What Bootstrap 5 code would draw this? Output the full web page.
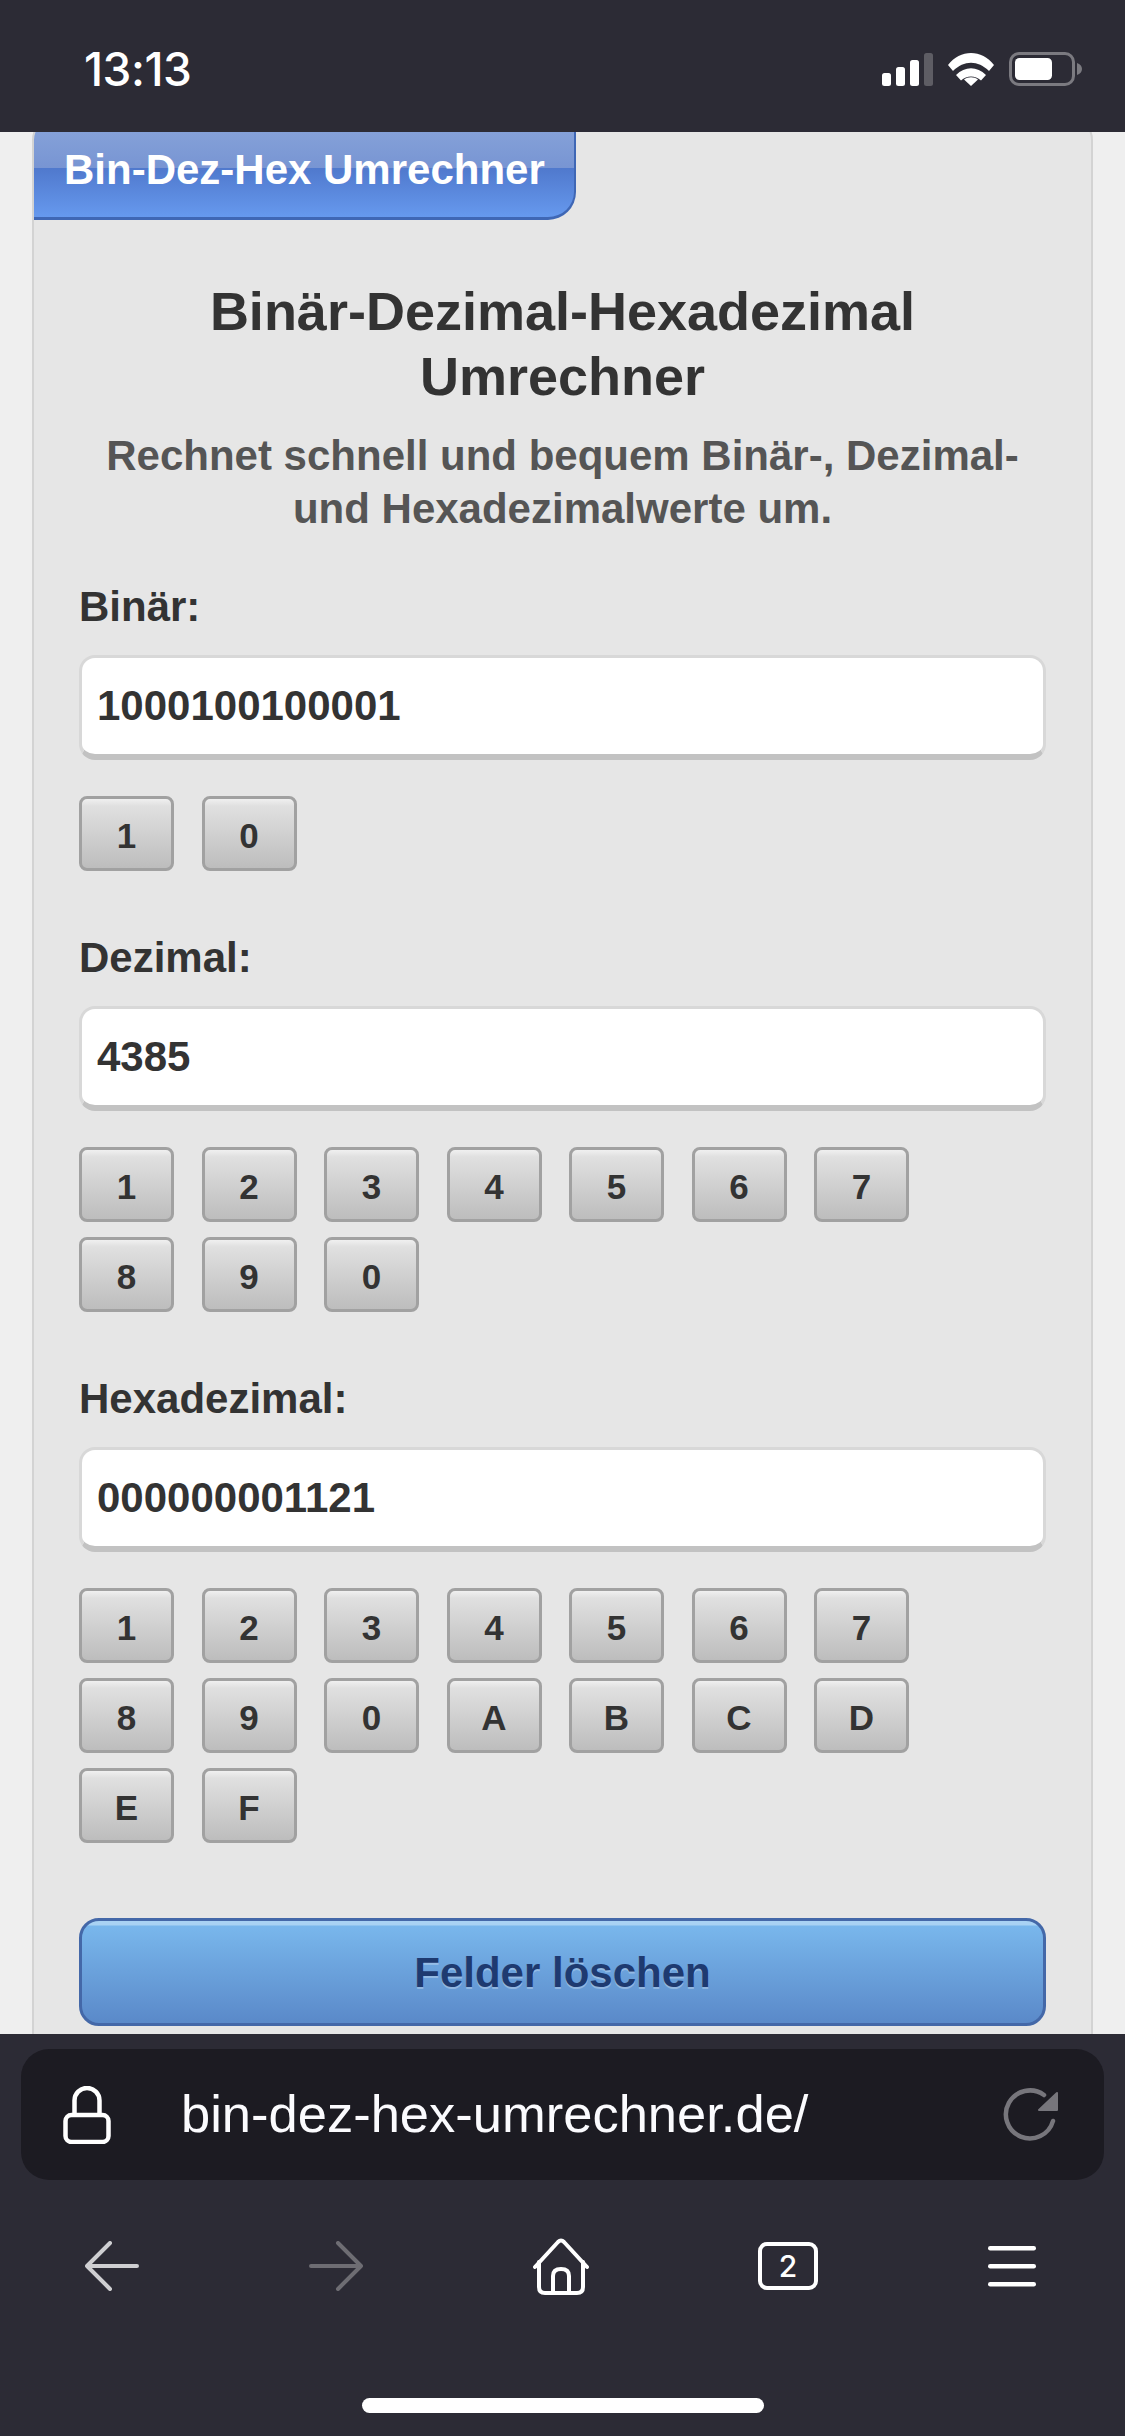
<!DOCTYPE html>
<html lang="de">
<head>
  <meta charset="UTF-8">
  <title>Bin-Dez-Hex Umrechner</title>
  <meta name="viewport" content="width=device-width, initial-scale=1">
  <link href="https://cdn.jsdelivr.net/npm/bootstrap@5.3.3/dist/css/bootstrap.min.css" rel="stylesheet">
  <style>
    html, body {
      height: 2436px;
      overflow: hidden;
    }
    body {
      background: #efefef;
      font-family: "Liberation Sans", Arial, sans-serif;
    }
    .phone-bar {
      background: #2c2b35;
      color: #fff;
    }
    .status-bar {
      height: 132px;
      padding: 6px 43px 0 84px;
    }
    .status-time {
      font-family: Inter, "Liberation Sans", sans-serif;
      font-size: 46px;
      font-weight: 500;
      letter-spacing: -0.5px;
    }
    .status-icons {
      gap: 15px;
    }
    .page-area {
      height: 1902px;
      overflow: hidden;
      padding: 0 32px;
    }
    .conv-box {
      background: #e6e6e6;
      border: 2px solid #d3d3d3;
      border-radius: 24px;
      margin-top: -16px;
      padding-bottom: 40px;
    }
    .conv-tab {
      width: 542px;
      height: 102px;
      padding: 16px 0 0 30px;
      border: solid #3f67b5;
      border-width: 0 2px 3px 0;
      border-radius: 22px 0 28px 0;
      background: linear-gradient(to bottom, #89a5da 0%, #7895d3 50%, #5079cd 51%, #6699ee 100%);
      color: #fff;
      font-size: 42px;
      font-weight: 700;
      line-height: 72px;
      white-space: nowrap;
    }
    .conv-body {
      padding: 0 45px;
    }
    .conv-title {
      color: #333;
      font-size: 54px;
      font-weight: 700;
      line-height: 65px;
      margin: 59px 0 0;
    }
    .conv-sub {
      color: #555;
      font-size: 42px;
      font-weight: 700;
      line-height: 53px;
      margin: 20px 0 47px;
    }
    .conv-label {
      color: #333;
      font-size: 42px;
      font-weight: 700;
      line-height: 50px;
      margin: 0 0 23px;
      display: block;
    }
    .conv-input {
      height: 105px;
      border-width: 3px 3px 6px;
      border-style: solid;
      border-color: #d8d8d8 #d8d8d8 #c2c2c2;
      border-radius: 16px;
      background: #fff;
      color: #333;
      font-size: 42px;
      font-weight: 700;
      padding: 0 15px;
      box-shadow: none;
    }
    .conv-input:focus {
      border-color: #d8d8d8 #d8d8d8 #c2c2c2;
      box-shadow: none;
    }
    .key-wrap {
      gap: 15px 27.5px;
      margin-top: 36px;
      width: 900px;
    }
    .key-btn {
      width: 95px;
      height: 75px;
      padding: 3px 0 0;
      border: 3px solid #a1a1a1;
      border-radius: 8px;
      background: linear-gradient(to bottom, #f0f0f0 0%, #e0e0e0 10%, #bdbdbd 100%);
      color: #333;
      font-size: 35px;
      font-weight: 700;
      line-height: 1;
    }
    .field-group {
      margin-bottom: 62px;
    }
    .field-group.field-last {
      margin-bottom: 75px;
    }
    .clear-btn {
      height: 108px;
      border: 3px solid #4468a8;
      border-radius: 20px;
      background: linear-gradient(to bottom, #a9d2f3 0, #a9d2f3 4px, #79b7ec 5px, #5a89c9 100%);
      color: #1e3a70;
      font-size: 42px;
      font-weight: 700;
      text-shadow: 0 2px 0 rgba(255, 255, 255, .3);
    }
    .browser-bar {
      height: 402px;
      padding-top: 15px;
    }
    .url-field {
      height: 131px;
      margin: 0 21px;
      padding: 0 45px 0 42px;
      background: #1c1b22;
      border-radius: 28px;
    }
    .url-text {
      font-size: 52.5px;
      margin-left: 70px;
      color: #fbfbfe;
      white-space: nowrap;
    }
    .tool-row {
      height: 60px;
      margin-top: 56px;
      padding: 0 89px 0 85px;
    }
    .home-line {
      width: 402px;
      height: 15px;
      margin: 102px auto 0;
      background: #fff;
      border-radius: 8px;
    }
    .tab-count {
      font-family: Inter, "Liberation Sans", sans-serif;
      font-size: 30px;
      font-weight: 500;
    }
  </style>
</head>
<body>

  <!-- iOS status bar -->
  <div class="phone-bar status-bar d-flex align-items-center justify-content-between">
    <div class="status-time">13:13</div>
    <div class="status-icons d-flex align-items-center">
      <svg width="51" height="33" viewBox="0 0 51 33" fill="#fff">
        <rect x="0" y="20" width="9" height="13" rx="2.500"/>
        <rect x="14" y="14" width="9" height="19" rx="2.500"/>
        <rect x="28" y="7" width="9" height="26" rx="2.500"/>
        <rect x="42" y="0" width="9" height="33" rx="2.500" fill="#5e5d64"/>
      </svg>
      <svg width="46" height="33" viewBox="0 0 46 33" fill="#fff">
        <path d="M0 12C12 -4 34 -4 46 12L41 18C30 7 16 7 5 18Z"/>
        <path d="M8 22C17 13 29 13 38 22L33 27.500C27 22 19 22 13 27.500Z"/>
        <path d="M23 33L16 26.500C20 23.500 26 23.500 30 26.500Z"/>
      </svg>
      <svg width="73" height="34" viewBox="0 0 73 34" fill="none">
        <rect x="1.500" y="1.500" width="63" height="31" rx="8.500" stroke="#7b7a80" stroke-width="3"/>
        <rect x="6" y="6" width="37" height="22" rx="4.500" fill="#fff"/>
        <path d="M68 11C71 12 73 14 73 17C73 20 71 22 68 23Z" fill="#7b7a80"/>
      </svg>
    </div>
  </div>

  <!-- Page content, cut off by the browser chrome -->
  <div class="page-area">
    <div class="conv-box">
      <div class="conv-tab">Bin-Dez-Hex Umrechner</div>
      <div class="conv-body">
        <h1 class="conv-title text-center">Binär-Dezimal-Hexadezimal<br>Umrechner</h1>
        <p class="conv-sub text-center">Rechnet schnell und bequem Binär-, Dezimal-<br>und Hexadezimalwerte um.</p>

        <div class="field-group">
          <label class="conv-label" for="binField">Binär:</label>
          <input id="binField" class="form-control conv-input" type="text" value="1000100100001">
          <div class="key-wrap d-flex flex-wrap" data-keys="10"></div>
        </div>

        <div class="field-group">
          <label class="conv-label" for="decField">Dezimal:</label>
          <input id="decField" class="form-control conv-input" type="text" value="4385">
          <div class="key-wrap d-flex flex-wrap" data-keys="1234567890"></div>
        </div>

        <div class="field-group field-last">
          <label class="conv-label" for="hexField">Hexadezimal:</label>
          <input id="hexField" class="form-control conv-input" type="text" value="000000001121">
          <div class="key-wrap d-flex flex-wrap" data-keys="1234567890ABCDEF"></div>
        </div>

        <button type="button" class="btn clear-btn w-100" id="clearBtn">Felder löschen</button>
      </div>
    </div>
  </div>

  <!-- Firefox bottom bar -->
  <div class="phone-bar browser-bar">
    <div class="url-field d-flex align-items-center">
      <svg width="48" height="58" viewBox="0 0 48 58" fill="none" stroke="#fff" stroke-width="4.500">
        <rect x="2.500" y="29" width="43" height="27" rx="6"/>
        <path d="M11.500 29V14.500A12.500 12.500 0 0 1 36.500 14.500V29"/>
      </svg>
      <div class="url-text flex-grow-1">bin-dez-hex-umrechner.de/</div>
      <svg width="56" height="56" viewBox="0 0 56 56" fill="none" stroke="#77767c" stroke-width="4.500" stroke-linecap="round">
        <path d="M50 34A24 24 0 1 1 41 8"/>
        <path d="M54 6V23H36Z" fill="#77767c" stroke-width="2" stroke-linejoin="round"/>
      </svg>
    </div>

    <div class="tool-row d-flex align-items-center justify-content-between">
      <svg width="54" height="50" viewBox="0 0 54 50" fill="none" stroke="#cfcfd2" stroke-width="4" stroke-linecap="round" stroke-linejoin="round">
        <path d="M25 2L2 25L25 48M2 25H52"/>
      </svg>
      <svg width="54" height="50" viewBox="0 0 54 50" fill="none" stroke="#6e6d73" stroke-width="4" stroke-linecap="round" stroke-linejoin="round">
        <path d="M29 2L52 25L29 48M52 25H2"/>
      </svg>
      <svg width="56" height="57" viewBox="0 0 56 57" fill="none" stroke="#fff" stroke-width="4" stroke-linejoin="round" stroke-linecap="round">
        <path d="M2 29L25 4Q28 1 31 4L54 29"/>
        <path d="M6 24V49Q6 55 12 55H44Q50 55 50 49V24"/>
        <path d="M20 55V38Q20 31 28 31Q36 31 36 38V55"/>
      </svg>
      <svg width="60" height="48" viewBox="0 0 60 48" fill="none">
        <rect x="2" y="2" width="56" height="44" rx="7" stroke="#fff" stroke-width="4"/>
        <text class="tab-count" x="30" y="35" text-anchor="middle" fill="#fff">2</text>
      </svg>
      <svg width="48" height="44" viewBox="0 0 48 44" fill="#fff">
        <rect x="0" y="2" width="48" height="4.500" rx="2.200"/>
        <rect x="0" y="20" width="48" height="4.500" rx="2.200"/>
        <rect x="0" y="38" width="48" height="4.500" rx="2.200"/>
      </svg>
    </div>
    <div class="home-line"></div>
  </div>

  <script src="https://cdn.jsdelivr.net/npm/bootstrap@5.3.3/dist/js/bootstrap.bundle.min.js"></script>
  <script>
    // build the key rows from the characters each field accepts
    document.querySelectorAll("[data-keys]").forEach(function(wrap) {
      wrap.dataset.keys.split("").forEach(function(k) {
        const b = document.createElement("button");
        b.type = "button";
        b.className = "btn key-btn";
        b.textContent = k;
        wrap.appendChild(b);
      });
    });

    document.getElementById("clearBtn").addEventListener("click", function() {
      document.querySelectorAll(".conv-input").forEach(function(i) {
        i.value = "";
      });
    });
  </script>
</body>
</html>
